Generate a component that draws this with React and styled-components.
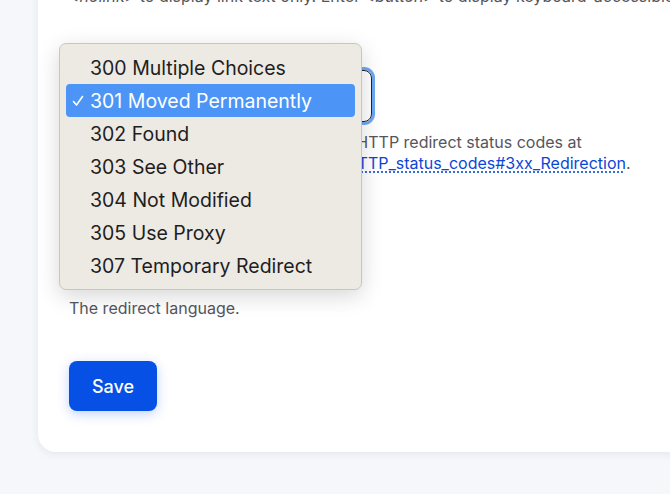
import React from "react";
import styled, { createGlobalStyle } from "styled-components";

const Global = createGlobalStyle`
  html, body { margin: 0; padding: 0; background: #f6f7fb; overflow: hidden; }
  body { font-family: Inter, "Noto Sans", sans-serif; }
  * { box-sizing: border-box; }
`;

const Page = styled.div`
  width: 670px;
  height: 494px;
  position: relative;
  overflow: hidden;
`;

const Card = styled.div`
  margin-left: 38px;
  margin-top: -14px;
  width: 660px;
  height: 466px;
  background: #fff;
  border-radius: 0 0 0 18px;
  box-shadow: 0 2px 8px rgba(30, 40, 80, 0.08);
  padding: 0 0 0 31px;
  display: flex;
  flex-direction: column;
`;

const Desc = styled.p`
  margin: 0;
  font-size: 16px;
  line-height: 21px;
  color: #55565c;
  width: ${(p) => p.$width || 600}px;
  white-space: ${(p) => (p.$nowrap ? "nowrap" : "normal")};
  em { font-style: italic; }
`;

const Field = styled.div`
  display: flex;
  flex-direction: column;
  margin-top: ${(p) => p.$top}px;
`;

const Label = styled.div`
  font-size: 16px;
  font-weight: 600;
  line-height: 20px;
  color: #222330;
  margin-bottom: 8px;
`;

const Select = styled.div`
  width: ${(p) => p.$width}px;
  height: 52px;
  border: 1px solid #222330;
  border-radius: 8px;
  box-shadow: ${(p) => (p.$focus ? "0 0 0 3px #6ea6f3" : "none")};
  display: flex;
  align-items: center;
  padding: 0 16px;
  font-size: 16px;
  color: #222330;
  margin-bottom: 10px;
`;

const Link = styled.a`
  color: #0a47d8;
  text-decoration: underline dotted;
  text-underline-offset: 3px;
`;

const SaveButton = styled.button`
  margin-top: 42px;
  align-self: flex-start;
  width: 88px;
  height: 50px;
  border: none;
  border-radius: 8px;
  background: #0650e6;
  color: #fff;
  font-family: Inter, "Noto Sans", sans-serif;
  font-size: 18px;
  font-weight: 500;
  box-shadow: 0 3px 12px rgba(6, 80, 230, 0.25);
`;

const Menu = styled.div`
  position: absolute;
  left: 59px;
  top: 43px;
  width: 303px;
  height: 247px;
  background: #ede9e3;
  border: 1px solid #c9c6c1;
  border-radius: 7px;
  box-shadow: 0 6px 22px rgba(0, 0, 0, 0.16);
  padding: 7px 6px;
  display: flex;
  flex-direction: column;
`;

const Item = styled.div`
  height: 33.3px;
  border-radius: 4px;
  display: flex;
  align-items: center;
  position: relative;
  padding-left: 24px;
  font-size: 19.5px;
  color: ${(p) => (p.$active ? "#fff" : "#1e1e1e")};
  background: ${(p) => (p.$active ? "#4c95f6" : "transparent")};
  font-family: Inter, "Noto Sans", sans-serif;
`;

const Check = styled.svg`
  position: absolute;
  left: 6px;
  top: 50%;
  margin-top: -6px;
`;

const options = [
  "300 Multiple Choices",
  "301 Moved Permanently",
  "302 Found",
  "303 See Other",
  "304 Not Modified",
  "305 Use Proxy",
  "307 Temporary Redirect",
];

export default function App() {
  return (
    <Page>
      <Global />
      <Card>
        <Desc $nowrap>
          <em>&lt;nolink&gt;</em> to display link text only. Enter <em>&lt;button&gt;</em> to display keyboard-accessible links.
        </Desc>
        <Field $top={35}>
          <Label>Redirect</Label>
          <Select $focus $width={303}>301 Moved Permanently</Select>
          <Desc $width={580}>
            You can learn more about the various HTTP redirect status codes at{" "}
            <Link>https://en.wikipedia.org/wiki/List_of_HTTP_status_codes#3xx_Redirection</Link>.
          </Desc>
        </Field>
        <Field $top={34}>
          <Label>Language</Label>
          <Select $width={220}>- Not specified -</Select>
          <Desc>The redirect language.</Desc>
        </Field>
        <SaveButton>Save</SaveButton>
      </Card>
      <Menu>
        {options.map((o, i) => (
          <Item key={o} $active={i === 1}>
            {i === 1 && (
              <Check width="12" height="12" viewBox="0 0 12 12">
                <path d="M1.5 6.5 L4.5 10 L10.5 1.5" fill="none" stroke="#fff" strokeWidth="1.6" strokeLinecap="round" strokeLinejoin="round" />
              </Check>
            )}
            {o}
          </Item>
        ))}
      </Menu>
    </Page>
  );
}
